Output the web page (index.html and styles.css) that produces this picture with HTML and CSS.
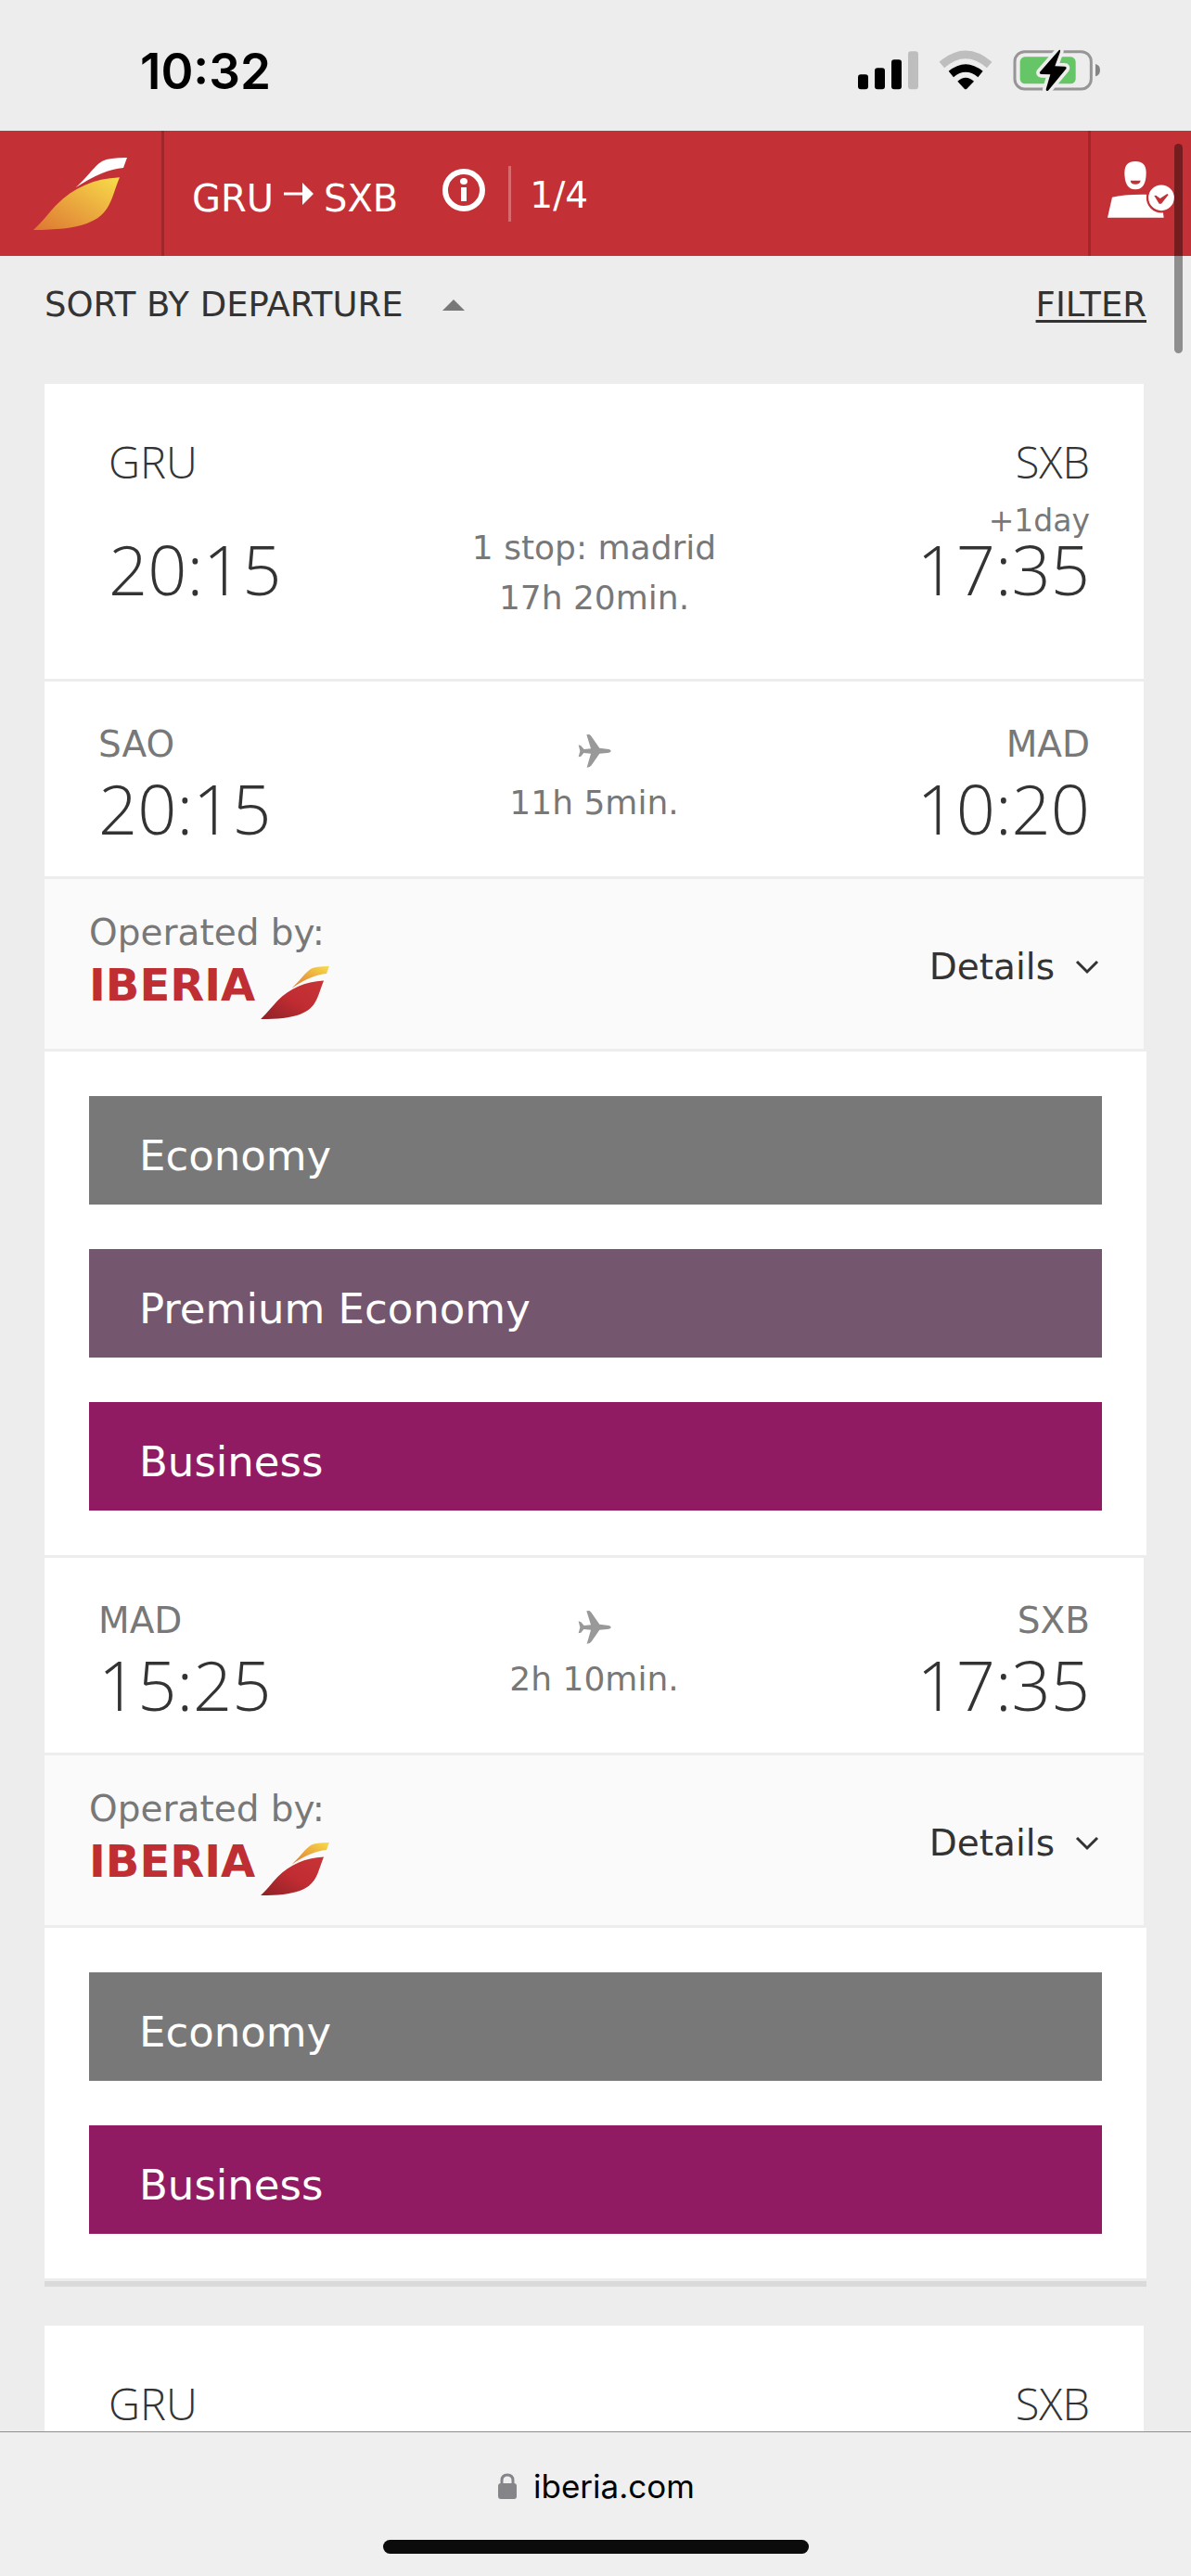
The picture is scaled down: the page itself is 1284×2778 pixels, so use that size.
FILE: index.html
```html
<!DOCTYPE html>
<html lang="en">
<head>
<meta charset="utf-8">
<meta name="viewport" content="width=device-width">
<title>Iberia – GRU to SXB</title>
<link rel="stylesheet" href="styles.css">
</head>
<body>
<svg class="defs" aria-hidden="true">
  <defs>
    <linearGradient id="gold" x1="0" y1="1" x2="1" y2="0">
      <stop offset="0" stop-color="#dd7632"/><stop offset="1" stop-color="#f8dc4a"/>
    </linearGradient>
    <linearGradient id="ruby" x1="0" y1="1" x2="1" y2="0">
      <stop offset="0" stop-color="#8c2228"/><stop offset=".5" stop-color="#c02c31"/><stop offset="1" stop-color="#c73437"/>
    </linearGradient>
    <path id="leaf-tip" d="M413 120L401 153Q335 158 247 217C298 168 308 146 333 131Q354 120 413 120Z"/>
    <path id="leaf-body" d="M389 184C305 188 240 218 185 272C162 296 140 326 110 354C185 354 240 348 283 333C360 305 360 255 389 184Z"/>
    <symbol id="plane" viewBox="257 36 106 108">
      <path d="M284 37L293 36Q297 38 300 43L326 80L350 83Q363 84 363 90Q363 95 350 96L326 98L300 136Q296 143 285 143L298 98L275 96L266 107L258 109L263 90L258 70L266 73L276 84L298 82Z"/>
    </symbol>
    <symbol id="chevron" viewBox="0 0 26 16"><path d="M2 2L13 13L24 2" fill="none" stroke="currentColor" stroke-width="3"/></symbol>
  </defs>
</svg>

<div class="status-bar">
  <time class="clock">10:32</time>
  <div class="status-icons">
    <svg width="65" height="46" viewBox="75 68 195 138" aria-label="Signal">
      <rect x="75" y="150" width="33" height="48" rx="9"/><rect x="129" y="129" width="33" height="69" rx="9"/>
      <rect x="183" y="102" width="33" height="96" rx="9"/><rect x="237" y="75" width="33" height="123" rx="9" fill="#bebebe"/>
    </svg>
    <svg width="58" height="46" viewBox="337 68 174 138" aria-label="Wi-Fi">
      <path d="M347 119Q424 52 501 119" fill="none" stroke="#bebebe" stroke-width="25"/>
      <path d="M377 149Q424 110 472 149" fill="none" stroke="#000" stroke-width="25"/>
      <path d="M398 172Q424 148 451 172L428 196Q424 200 420 196Z"/>
    </svg>
    <svg width="95" height="46" viewBox="577 68 285 138" aria-label="Battery charging">
      <rect x="583" y="76" width="247" height="121" rx="32" fill="none" stroke="#969696" stroke-width="9"/>
      <rect x="600" y="93" width="180" height="87" rx="16" fill="#66c567"/>
      <path d="M844 116Q859 120 859 136Q859 152 844 156Z" fill="#858585"/>
      <path d="M727 70L664 142Q662 148 668 149L698 150L684 198Q684 206 691 202L749 132Q752 124 744 124L713 123L730 76Q731 69 727 70Z" stroke="#ededed" stroke-width="22" stroke-linejoin="round"/>
      <path d="M727 70L664 142Q662 148 668 149L698 150L684 198Q684 206 691 202L749 132Q752 124 744 124L713 123L730 76Q731 69 727 70Z"/>
    </svg>
  </div>
</div>

<header class="header">
  <a class="home" href="#" aria-label="Iberia">
    <svg width="101" height="78" viewBox="110 120 303 234"><use href="#leaf-tip" fill="#fff"/><use href="#leaf-body" fill="url(#gold)"/></svg>
  </a>
  <div class="route">
    <span>GRU</span>
    <svg width="32" height="24" viewBox="0 0 32 24" aria-label="to"><path d="M0 10.500H20V0L32 12L20 24V13.500H0Z" fill="#fff"/></svg>
    <span>SXB</span>
  </div>
  <button class="info" type="button" aria-label="Flight information">
    <svg width="48" height="48" viewBox="0 0 48 48"><circle cx="24" cy="24" r="20" fill="none" stroke="#fff" stroke-width="6"/><ellipse cx="24" cy="14.500" rx="4" ry="3.500" fill="#fff"/><path d="M21 21H27V36H21Z" fill="#fff"/></svg>
  </button>
  <span class="step">1/4</span>
  <a class="account" href="#" aria-label="My account">
    <svg width="74" height="63" viewBox="880 430 222 189">
      <path d="M938 470Q938 433 973 433Q1008 433 1008 470Q1008 524 973 524Q938 524 938 470Z" fill="#fff"/>
      <path d="M957 495H990Q988 507 973 507Q958 507 957 495Z" fill="#c33035"/>
      <path d="M898 549Q935 539 1008 540L1060 580L1065 615H883Z" fill="#fff"/>
      <circle cx="1057" cy="551" r="45" fill="#fff" stroke="#c33035" stroke-width="7"/>
      <path d="M1034 544L1040 543L1053 553L1076 538L1080 541L1057 570H1050Z" fill="#c33035"/>
    </svg>
  </a>
</header>

<main class="content">
  <div class="toolbar">
    <button class="sort" type="button">SORT BY DEPARTURE <span class="caret"></span></button>
    <a class="filter" href="#">FILTER</a>
  </div>

  <article class="flight">
    <section class="summary">
      <div class="stop"><span class="city">GRU</span><time class="hour">20:15</time></div>
      <div class="journey"><span>1 stop: madrid</span><span>17h 20min.</span></div>
      <div class="stop arrival"><span class="city">SXB</span><div class="landing"><span class="plus-day">+1day</span><time class="hour">17:35</time></div></div>
    </section>

    <section class="leg">
      <div class="stop"><span class="airport">SAO</span><time class="hour">20:15</time></div>
      <div class="duration"><svg class="plane" aria-hidden="true"><use href="#plane"/></svg><span>11h 5min.</span></div>
      <div class="stop arrival"><span class="airport">MAD</span><time class="hour">10:20</time></div>
    </section>
    <section class="operator">
      <div class="carrier">
        <span>Operated by:</span>
        <div class="logo"><span class="wordmark">IBERIA</span><svg width="74" height="57" viewBox="110 120 303 234" aria-hidden="true"><use href="#leaf-tip" fill="url(#gold)"/><use href="#leaf-body" fill="url(#ruby)"/></svg></div>
      </div>
      <button class="details" type="button">Details <svg width="26" height="16" aria-hidden="true"><use href="#chevron"/></svg></button>
    </section>
    <section class="fares">
      <button class="fare economy" type="button">Economy</button>
      <button class="fare premium" type="button">Premium Economy</button>
      <button class="fare business" type="button">Business</button>
    </section>

    <section class="leg">
      <div class="stop"><span class="airport">MAD</span><time class="hour">15:25</time></div>
      <div class="duration"><svg class="plane" aria-hidden="true"><use href="#plane"/></svg><span>2h 10min.</span></div>
      <div class="stop arrival"><span class="airport">SXB</span><time class="hour">17:35</time></div>
    </section>
    <section class="operator">
      <div class="carrier">
        <span>Operated by:</span>
        <div class="logo"><span class="wordmark">IBERIA</span><svg width="74" height="57" viewBox="110 120 303 234" aria-hidden="true"><use href="#leaf-tip" fill="url(#gold)"/><use href="#leaf-body" fill="url(#ruby)"/></svg></div>
      </div>
      <button class="details" type="button">Details <svg width="26" height="16" aria-hidden="true"><use href="#chevron"/></svg></button>
    </section>
    <section class="fares last">
      <button class="fare economy" type="button">Economy</button>
      <button class="fare business" type="button">Business</button>
    </section>
  </article>

  <article class="flight">
    <section class="summary">
      <div class="stop"><span class="city">GRU</span></div>
      <div class="stop arrival"><span class="city">SXB</span></div>
    </section>
  </article>
</main>

<footer class="browser-bar">
  <div class="address">
    <svg width="20" height="28" viewBox="0 0 20 28" aria-hidden="true"><path d="M4 13V8Q4 2 10 2Q16 2 16 8V13" fill="none" stroke="#858489" stroke-width="3"/><rect y="11" width="20" height="17" rx="3" fill="#858489"/></svg>
    <span>iberia.com</span>
  </div>
  <div class="home-indicator"></div>
</footer>
<div class="scrollbar"></div>
</body>
</html>
```
FILE: styles.css
```css
* { box-sizing: border-box; }

body {
  margin: 0;
  height: 100vh;
  display: flex;
  flex-direction: column;
  overflow: hidden;
  position: relative;
  background: #ededed;
  color: #333;
  font-family: "DejaVu Sans", Verdana, sans-serif;
}

button {
  border: 0;
  padding: 0;
  background: none;
  color: inherit;
  font: inherit;
  text-align: left;
}

a { color: inherit; }
svg { display: block; flex: none; }
.defs { position: absolute; width: 0; height: 0; }

/* Phone status bar */
.status-bar {
  flex: none;
  height: 141px;
  padding: 10px 97px 0 151px;
  display: flex;
  align-items: center;
  justify-content: space-between;
}
.clock {
  padding-top: 2px;
  color: #000;
  font: 600 53px/60px Inter, sans-serif;
}
.status-icons { display: flex; gap: 22px; }

/* Site header */
.header {
  flex: none;
  height: 135px;
  display: flex;
  align-items: center;
  background: #c33035;
  color: #fff;
}
.home {
  align-self: stretch;
  width: 177px;
  padding: 29px 0 0 36px;
  border-right: 3px solid #a0262a;
}
.route {
  display: flex;
  align-items: center;
  gap: 11px;
  padding-left: 30px;
  font-size: 40px;
  line-height: 48px;
}
.route span { padding-top: 10px; }
.info { margin: 0 24px 8px 47px; }
.step {
  height: 60px;
  padding-left: 20px;
  border-left: 3px solid #d8696d;
  font-size: 39px;
  line-height: 64px;
}
.account {
  align-self: stretch;
  width: 111px;
  margin-left: auto;
  padding: 32px 0 0 17px;
  border-left: 3px solid #a0262a;
}

/* Results */
.content {
  flex: 1;
  min-height: 0;
  overflow: hidden;
  padding: 0 51px 0 48px;
}
.toolbar {
  height: 138px;
  padding-top: 31px;
  display: flex;
  justify-content: space-between;
  align-items: flex-start;
  font-size: 37px;
  line-height: 44px;
}
.sort { display: flex; align-items: center; gap: 42px; }
.caret {
  border: 12px solid transparent;
  border-top: 0;
  border-bottom-color: #787878;
}
.filter {
  margin-right: -3px;
  text-decoration-thickness: 3px;
  text-underline-offset: 4px;
}

.flight { margin-bottom: 48px; }
.summary, .leg {
  display: grid;
  grid-template-columns: 1fr auto 1fr;
  background: #fff;
  border-bottom: 3px solid #ededed;
}
.summary { padding: 56px 58px 82px; }
.leg { padding: 44px 58px 37px; }
.stop {
  display: flex;
  flex-direction: column;
  align-items: flex-start;
}
.arrival { grid-column: 3; align-items: flex-end; }
.summary .stop { justify-content: space-between; gap: 20px; padding-left: 11px; }
.leg .stop { gap: 9px; }
.city { font: 300 47px/56px "Open Sans", sans-serif; }
.hour { font: 300 74px/72px "Open Sans", sans-serif; }
.landing {
  display: flex;
  flex-direction: column;
  align-items: flex-end;
}
.plus-day { color: #787878; font-size: 33px; line-height: 32px; }
.journey, .duration {
  display: flex;
  flex-direction: column;
  align-items: center;
  color: #787878;
  font-size: 36px;
  line-height: 54px;
}
.journey { padding-top: 94px; margin-bottom: -60px; }
.duration { gap: 11px; padding-top: 13px; }
.plane { width: 36px; height: 36px; fill: #999; }
.airport { color: #787878; font-size: 39px; line-height: 48px; }

.operator {
  display: flex;
  justify-content: space-between;
  align-items: center;
  padding: 34px 48px 32px;
  background: #fafafa;
  border-bottom: 3px solid #ededed;
  font-size: 39px;
  line-height: 48px;
}
.carrier { color: #787878; }
.logo {
  display: flex;
  gap: 6px;
  margin-top: 12px;
}
.wordmark {
  color: #bf2e33;
  font-size: 48px;
  font-weight: 700;
  line-height: 40px;
}
.details {
  display: flex;
  align-items: center;
  gap: 22px;
  padding-top: 4px;
}

.fares {
  display: flex;
  flex-direction: column;
  gap: 48px;
  margin-right: -3px;
  padding: 48px;
  background: #fff;
  border-bottom: 3px solid #ededed;
}
.fares.last { box-shadow: 0 6px #dadada; }
.fare {
  height: 117px;
  padding: 12px 54px 0;
  color: #fff;
  font-size: 45px;
}
.economy { background: #787878; }
.premium { background: #75566f; }
.business { background: #911b62; }

/* Browser chrome */
.browser-bar {
  flex: none;
  display: flex;
  flex-direction: column;
  align-items: center;
  gap: 34px;
  padding: 34px 0 24px;
  background: #efefef;
  border-top: 1px solid #8e8e8e;
}
.address {
  display: flex;
  align-items: center;
  gap: 18px;
  padding-left: 2px;
  color: #000;
  font: 400 35px/48px Inter, sans-serif;
}
.home-indicator {
  width: 459px;
  height: 15px;
  border-radius: 8px;
  background: #0b0b0b;
}
.scrollbar {
  position: absolute;
  top: 155px;
  right: 9px;
  width: 9px;
  height: 226px;
  border-radius: 5px;
  background: rgba(0, 0, 0, 0.4);
}
```
